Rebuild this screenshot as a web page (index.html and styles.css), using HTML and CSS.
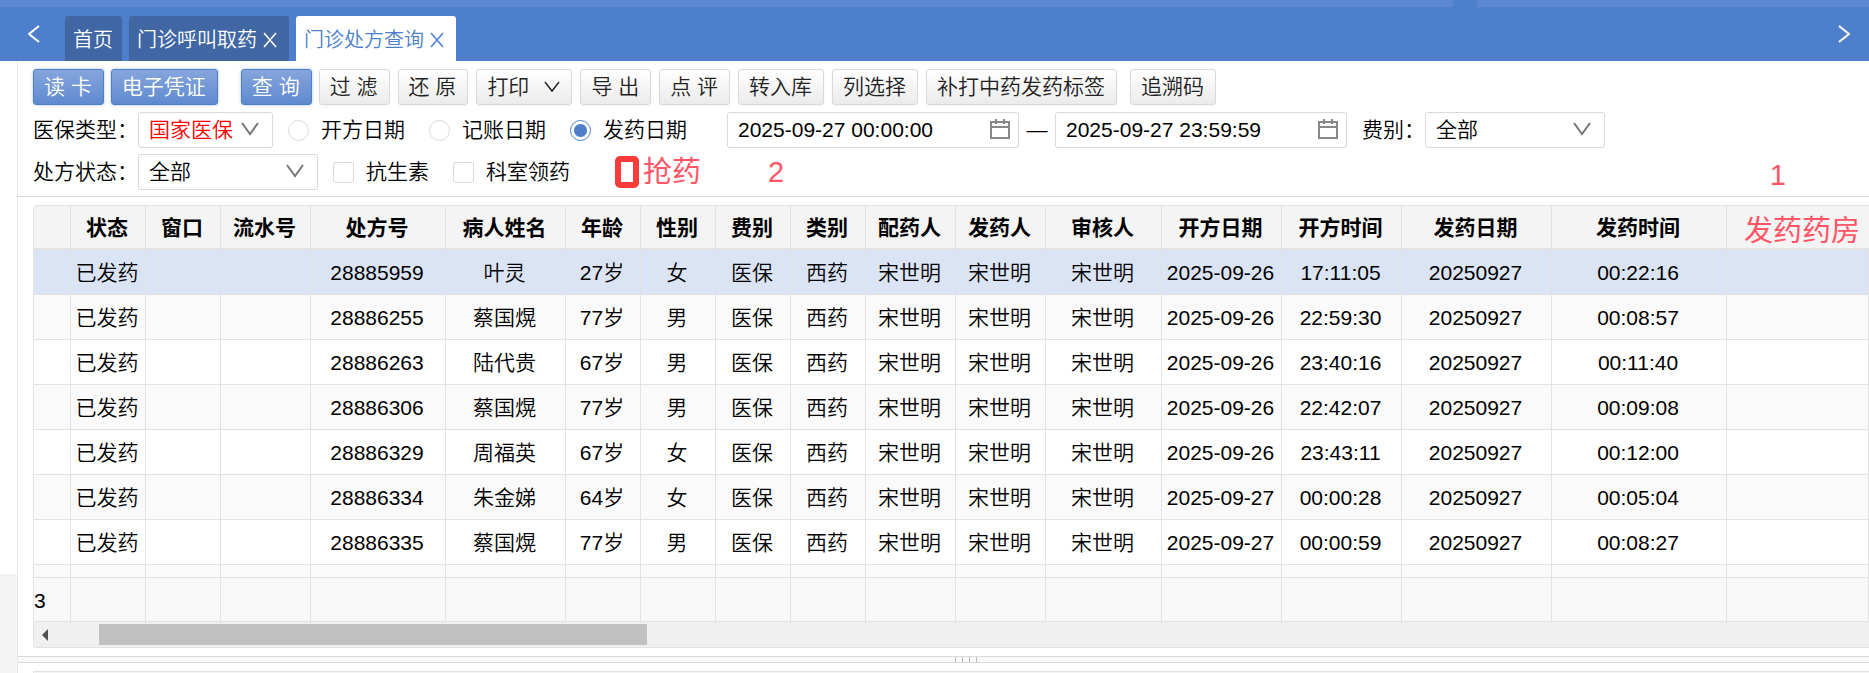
FILE: index.html
```html
<!DOCTYPE html>
<html lang="zh-CN">
<head>
    <meta charset="UTF-8">
    <meta name="viewport" content="width=device-width, initial-scale=1.0">
    <title>门诊处方查询</title>
    <link rel="stylesheet" href="styles.css">
</head>
<body>

    <div class="top-strip">
        <div class="strip-main"></div>
        <div class="strip-side"></div>
    </div>

    <nav class="tab-bar">
        <button class="nav-arrow" aria-label="向左">
            <svg width="12" height="18" viewBox="0 0 12 18"><path d="M11 1L1 9l10 8"/></svg>
        </button>
        <div class="tabs">
            <a href="#" class="tab tab-home">首页</a>
            <a href="#" class="tab">门诊呼叫取药
                <svg width="14" height="16" viewBox="0 0 14 16"><path d="M1 1l12 14M13 1L1 15"/></svg>
            </a>
            <a href="#" class="tab active">门诊处方查询
                <svg width="14" height="16" viewBox="0 0 14 16"><path d="M1 1l12 14M13 1L1 15"/></svg>
            </a>
        </div>
        <button class="nav-arrow" aria-label="向右">
            <svg width="12" height="18" viewBox="0 0 12 18"><path d="M1 1l10 8-10 8"/></svg>
        </button>
    </nav>

    <div class="page">
        <aside class="side">
            <div class="side-foot"></div>
        </aside>

        <main class="main">
            <section class="search">
                <div class="toolbar">
                    <div class="btn-group primary-group">
                        <button class="btn primary">读 卡</button>
                        <button class="btn primary">电子凭证</button>
                        <button class="btn primary query">查 询</button>
                    </div>
                    <div class="btn-group">
                        <button class="btn">过 滤</button>
                        <button class="btn">还 原</button>
                        <button class="btn">打印
                            <svg class="caret" width="16" height="12" viewBox="0 0 16 12"><path d="M1 1l7 9 7-9"/></svg>
                        </button>
                        <button class="btn">导 出</button>
                        <button class="btn">点 评</button>
                        <button class="btn">转入库</button>
                        <button class="btn">列选择</button>
                        <button class="btn">补打中药发药标签</button>
                        <button class="btn trace">追溯码</button>
                    </div>
                </div>

                <div class="filter-row">
                    <label for="insure">医保类型：</label>
                    <div class="select narrow">
                        <select id="insure" class="red">
                            <option>国家医保</option>
                        </select>
                        <svg width="18" height="14" viewBox="0 0 18 14"><path d="M1 1l8 11 8-11"/></svg>
                    </div>
                    <label class="check"><input type="radio" name="dateType">开方日期</label>
                    <label class="check"><input type="radio" name="dateType">记账日期</label>
                    <label class="check"><input type="radio" name="dateType" checked>发药日期</label>
                    <div class="date first-date">
                        <input type="text" value="2025-09-27 00:00:00" aria-label="开始时间">
                        <svg width="20" height="20" viewBox="0 0 20 20"><path d="M1 3h18v16H1zM1 8h18M6 0v5M14 0v5"/></svg>
                    </div>
                    <span class="dash">—</span>
                    <div class="date">
                        <input type="text" value="2025-09-27 23:59:59" aria-label="结束时间">
                        <svg width="20" height="20" viewBox="0 0 20 20"><path d="M1 3h18v16H1zM1 8h18M6 0v5M14 0v5"/></svg>
                    </div>
                    <label class="fee" for="fee">费别：</label>
                    <div class="select">
                        <select id="fee">
                            <option>全部</option>
                        </select>
                        <svg width="18" height="14" viewBox="0 0 18 14"><path d="M1 1l8 11 8-11"/></svg>
                    </div>
                </div>

                <div class="filter-row">
                    <label for="state">处方状态：</label>
                    <div class="select">
                        <select id="state">
                            <option>全部</option>
                        </select>
                        <svg width="18" height="14" viewBox="0 0 18 14"><path d="M1 1l8 11 8-11"/></svg>
                    </div>
                    <label class="check"><input type="checkbox">抗生素</label>
                    <label class="check"><input type="checkbox">科室领药</label>
                    <span class="note-box"></span>
                    <span class="note">抢药</span>
                    <span class="note note-two">2</span>
                    <span class="note note-one">1</span>
                </div>
            </section>

            <section class="grid-panel">
                <div class="grid">
                    <div class="grid-body">
                        <table class="grid-table">
                            <colgroup>
                                <col class="w37"><col class="w75"><col class="w75"><col class="w90"><col class="w135"><col class="w120">
                                <col class="w75"><col class="w75"><col class="w75"><col class="w75"><col class="w90"><col class="w90">
                                <col class="w116"><col class="w120"><col class="w120"><col class="w150"><col class="w175"><col>
                            </colgroup>
                            <thead>
                                <tr>
                                    <th></th><th>状态</th><th>窗口</th><th>流水号</th><th>处方号</th><th>病人姓名</th>
                                    <th>年龄</th><th>性别</th><th>费别</th><th>类别</th><th>配药人</th><th>发药人</th>
                                    <th>审核人</th><th>开方日期</th><th>开方时间</th><th>发药日期</th><th>发药时间</th><th class="note">发药药房</th>
                                </tr>
                            </thead>
                            <tbody>
                                <tr class="selected">
                                    <td></td><td>已发药</td><td></td><td></td><td>28885959</td><td>叶灵</td>
                                    <td>27岁</td><td>女</td><td>医保</td><td>西药</td><td>宋世明</td><td>宋世明</td>
                                    <td>宋世明</td><td>2025-09-26</td><td>17:11:05</td><td>20250927</td><td>00:22:16</td><td></td>
                                </tr>
                                <tr>
                                    <td></td><td>已发药</td><td></td><td></td><td>28886255</td><td>蔡国熀</td>
                                    <td>77岁</td><td>男</td><td>医保</td><td>西药</td><td>宋世明</td><td>宋世明</td>
                                    <td>宋世明</td><td>2025-09-26</td><td>22:59:30</td><td>20250927</td><td>00:08:57</td><td></td>
                                </tr>
                                <tr>
                                    <td></td><td>已发药</td><td></td><td></td><td>28886263</td><td>陆代贵</td>
                                    <td>67岁</td><td>男</td><td>医保</td><td>西药</td><td>宋世明</td><td>宋世明</td>
                                    <td>宋世明</td><td>2025-09-26</td><td>23:40:16</td><td>20250927</td><td>00:11:40</td><td></td>
                                </tr>
                                <tr>
                                    <td></td><td>已发药</td><td></td><td></td><td>28886306</td><td>蔡国熀</td>
                                    <td>77岁</td><td>男</td><td>医保</td><td>西药</td><td>宋世明</td><td>宋世明</td>
                                    <td>宋世明</td><td>2025-09-26</td><td>22:42:07</td><td>20250927</td><td>00:09:08</td><td></td>
                                </tr>
                                <tr>
                                    <td></td><td>已发药</td><td></td><td></td><td>28886329</td><td>周福英</td>
                                    <td>67岁</td><td>女</td><td>医保</td><td>西药</td><td>宋世明</td><td>宋世明</td>
                                    <td>宋世明</td><td>2025-09-26</td><td>23:43:11</td><td>20250927</td><td>00:12:00</td><td></td>
                                </tr>
                                <tr>
                                    <td></td><td>已发药</td><td></td><td></td><td>28886334</td><td>朱金娣</td>
                                    <td>64岁</td><td>女</td><td>医保</td><td>西药</td><td>宋世明</td><td>宋世明</td>
                                    <td>宋世明</td><td>2025-09-27</td><td>00:00:28</td><td>20250927</td><td>00:05:04</td><td></td>
                                </tr>
                                <tr>
                                    <td></td><td>已发药</td><td></td><td></td><td>28886335</td><td>蔡国熀</td>
                                    <td>77岁</td><td>男</td><td>医保</td><td>西药</td><td>宋世明</td><td>宋世明</td>
                                    <td>宋世明</td><td>2025-09-27</td><td>00:00:59</td><td>20250927</td><td>00:08:27</td><td></td>
                                </tr>
                                <tr>
                                    <td></td><td></td><td></td><td></td><td></td><td></td>
                                    <td></td><td></td><td></td><td></td><td></td><td></td>
                                    <td></td><td></td><td></td><td></td><td></td><td></td>
                                </tr>
                            </tbody>
                        </table>
                    </div>
                    <table class="grid-table grid-total">
                        <colgroup>
                            <col class="w37"><col class="w75"><col class="w75"><col class="w90"><col class="w135"><col class="w120">
                            <col class="w75"><col class="w75"><col class="w75"><col class="w75"><col class="w90"><col class="w90">
                            <col class="w116"><col class="w120"><col class="w120"><col class="w150"><col class="w175"><col>
                        </colgroup>
                        <tbody>
                            <tr>
                                <td class="count">3</td><td></td><td></td><td></td><td></td><td></td>
                                <td></td><td></td><td></td><td></td><td></td><td></td>
                                <td></td><td></td><td></td><td></td><td></td><td></td>
                            </tr>
                        </tbody>
                    </table>
                    <div class="scrollbar">
                        <svg width="6" height="12" viewBox="0 0 6 12"><path d="M6 0v12L0 6z"/></svg>
                        <div class="thumb"></div>
                    </div>
                </div>
            </section>

            <div class="splitter">
                <i></i><i></i><i></i><i></i>
            </div>

            <section class="detail-panel">
                <div class="detail"></div>
            </section>
        </main>
    </div>

</body>
</html>
```
FILE: styles.css
```css
* {
    box-sizing: border-box;
}
body {
    margin: 0;
    height: 100vh;
    display: flex;
    flex-direction: column;
    overflow: hidden;
    font-family: "Liberation Sans", "Noto Sans CJK SC", sans-serif;
    font-size: 21px;
    font-weight: 350;
    line-height: 24px;
    color: #000;
    background-color: #fff;
}
button, input, select {
    font: inherit;
    color: inherit;
}
svg {
    fill: none;
    stroke: currentColor;
    stroke-width: 2;
}

/* blue header */
.top-strip {
    display: flex;
    gap: 24px;
    height: 7px;
    flex: none;
    background-color: #4e7fcb;
}
.strip-main {
    flex: 1;
    background-color: #5a87cf;
}
.strip-side {
    width: 21%;
    background-color: #5a87cf;
}
.tab-bar {
    display: flex;
    align-items: flex-end;
    height: 54px;
    flex: none;
    padding: 0 19px 0 28px;
    background-color: #4e7fcb;
    color: #fff;
}
.nav-arrow {
    display: flex;
    padding: 0;
    margin-bottom: 18px;
    border: none;
    background: none;
}
.tabs {
    flex: 1;
    display: flex;
    gap: 7px;
    margin-left: 25px;
}
.tab {
    display: flex;
    align-items: center;
    gap: 6px;
    height: 45px;
    padding: 3px 12px 0 8px;
    border-radius: 3px 3px 0 0;
    background-color: #4067a4;
    color: #fff;
    font-size: 20px;
    text-decoration: none;
}
.tab svg, .caret {
    stroke-width: 1.5;
}
.tab-home {
    padding: 3px 9px 0 8px;
}
.tab.active {
    background-color: #fff;
    color: #4e7fcb;
}

.page {
    flex: 1;
    display: flex;
    min-height: 0;
}
.side {
    width: 18px;
    display: flex;
    flex-direction: column;
    justify-content: flex-end;
    border-right: 1px solid #e8e8e8;
}
.side-foot {
    height: 99px;
    background-color: #f4f4f4;
}
.main {
    flex: 1;
    min-width: 0;
    display: flex;
    flex-direction: column;
}

/* search area */
.search {
    display: flex;
    flex-direction: column;
    gap: 6px;
    padding: 8px 0 6px 15px;
    border-bottom: 1px solid #d9d9d9;
    white-space: nowrap;
}
.toolbar {
    display: flex;
    gap: 7px;
    height: 37px;
}
.btn-group {
    display: flex;
    gap: 8px;
}
.primary-group {
    gap: 7px;
}
.btn {
    display: flex;
    align-items: center;
    height: 36px;
    padding: 0 11px 0 10px;
    border: 1px solid #d9d9d9;
    border-radius: 3px;
    background: linear-gradient(#fff, #ebebeb);
    box-shadow: 0 2px 2px rgba(0, 0, 0, 0.03);
    color: #222;
}
.btn.primary {
    border-color: #4e7fcb;
    background: linear-gradient(#86a5dc, #5f8ad0);
    box-shadow: 0 0 3px rgba(78, 127, 203, 0.5);
    color: #fff;
}
.query {
    margin-left: 16px;
}
.trace {
    margin-left: 5px;
}
.caret {
    margin-left: 15px;
}
.filter-row {
    display: flex;
    align-items: center;
    height: 36px;
}
.select {
    position: relative;
    width: 180px;
    height: 36px;
}
.select.narrow {
    width: 135px;
}
.select select {
    appearance: none;
    width: 100%;
    height: 100%;
    padding: 0 10px;
    border: 1px solid #d9d9d9;
    border-radius: 3px;
    background-color: #fff;
}
.select select.red {
    color: #f00;
}
.select svg {
    position: absolute;
    right: 14px;
    top: 10px;
    color: #777;
}
.check {
    display: flex;
    align-items: center;
    gap: 12px;
    margin-right: 24px;
}
.select + .check {
    margin-left: 15px;
}
.check input {
    appearance: none;
    width: 21px;
    height: 21px;
    margin: 0;
    border: 1px solid #d9d9d9;
    border-radius: 3px;
    background-color: #fff;
}
.check input[type="radio"] {
    border-radius: 50%;
}
.check input[type="radio"]:checked {
    border-color: #4e7fcb;
    background: radial-gradient(circle, #4e7fcb 6px, #fff 7px);
}
.date {
    position: relative;
    width: 292px;
    height: 36px;
}
.first-date {
    margin-left: 16px;
}
.date input {
    width: 100%;
    height: 100%;
    padding: 0 10px;
    border: 1px solid #d9d9d9;
    border-radius: 3px;
}
.date svg {
    position: absolute;
    right: 9px;
    top: 7px;
    color: #888;
}
.dash {
    width: 36px;
    text-align: center;
}
.fee {
    margin-left: 15px;
}

/* red remarks */
.note {
    color: #ff5566;
    font-size: 29px;
    font-weight: 400;
    line-height: 32px;
}
.note-box {
    width: 24px;
    height: 32px;
    margin: 0 4px 0 21px;
    border: 6px solid #fb3a3a;
    border-radius: 5px;
}
.note-two {
    margin-left: 67px;
}
.note-one {
    margin: 6px 83px 0 auto;
}

/* result table */
.grid-panel {
    flex: 1;
    min-height: 0;
    padding: 8px 0 8px 15px;
}
.grid {
    height: 100%;
    display: flex;
    flex-direction: column;
    border: 1px solid #e2e2e2;
    border-right: none;
    border-radius: 3px 0 0 3px;
}
.grid-body {
    flex: 1;
    min-height: 0;
    overflow: hidden;
}
.grid-table {
    width: 100%;
    table-layout: fixed;
    border-collapse: separate;
    border-spacing: 0;
    text-align: center;
}
.grid-table th, .grid-table td {
    height: 45px;
    padding: 2px 2px 0 0;
    border-right: 1px solid #e2e2e2;
    border-bottom: 1px solid #e2e2e2;
    white-space: nowrap;
}
.grid-table th {
    height: 44px;
    border-bottom-width: 2px;
    background-color: #f4f4f4;
    font-weight: bold;
}
.grid-table th.note {
    padding: 8px 0 0 8px;
    font-weight: 400;
}
.grid-table th:last-child {
    border-right: none;
}
.grid-table tr:nth-child(even) td {
    background-color: #fafafa;
}
.grid-table .selected td {
    background-color: #dbe4f5;
}
.grid-total td {
    border-top: 1px solid #e2e2e2;
    background-color: #f8f8f8;
}
.grid-total td.count {
    text-align: left;
}
.w37 { width: 37px; }
.w75 { width: 75px; }
.w90 { width: 90px; }
.w116 { width: 116px; }
.w120 { width: 120px; }
.w135 { width: 135px; }
.w150 { width: 150px; }
.w175 { width: 175px; }
.scrollbar {
    display: flex;
    align-items: center;
    gap: 51px;
    height: 25px;
    padding-left: 8px;
    background-color: #f0f0f0;
}
.scrollbar svg {
    fill: #505050;
    stroke: none;
}
.thumb {
    width: 30%;
    height: 21px;
    background-color: #c1c1c1;
}

.splitter {
    display: flex;
    justify-content: center;
    gap: 6px;
    height: 7px;
    padding-left: 44px;
    border-top: 1px solid #d9d9d9;
    border-bottom: 1px solid #d9d9d9;
    background-color: #fafafa;
}
.splitter i {
    width: 1px;
    background-color: #bbb;
}
.detail-panel {
    height: 10px;
    padding: 8px 0 0 15px;
}
.detail {
    height: 100%;
    border-top: 1px solid #e2e2e2;
    border-left: 1px solid #e2e2e2;
    background-color: #f4f4f4;
}
```
